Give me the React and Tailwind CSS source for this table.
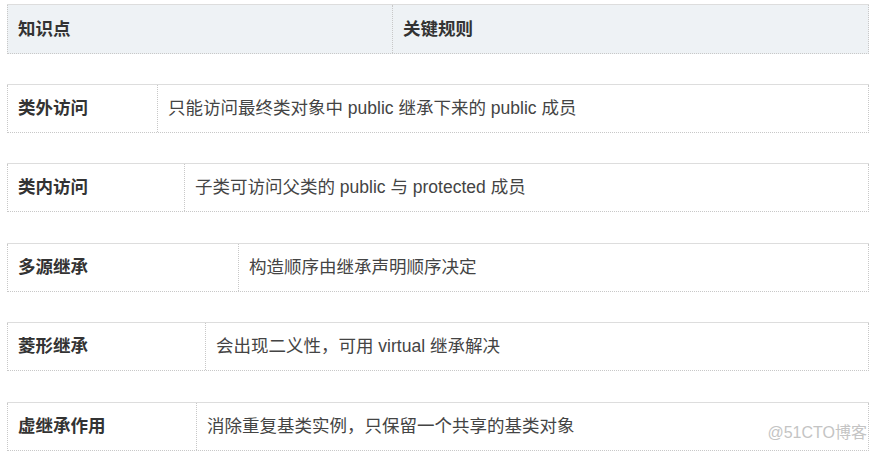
import React from "react";

const rows = [
  { k: "类外访问", v: "只能访问最终类对象中 public 继承下来的 public 成员", w: "w-[150px]" },
  { k: "类内访问", v: "子类可访问父类的 public 与 protected 成员", w: "w-[177px]" },
  { k: "多源继承", v: "构造顺序由继承声明顺序决定", w: "w-[231px]" },
  { k: "菱形继承", v: "会出现二义性，可用 virtual 继承解决", w: "w-[198px]" },
  { k: "虚继承作用", v: "消除重复基类实例，只保留一个共享的基类对象", w: "w-[189px]" },
];

const gaps = ["mt-[30px]", "mt-[30px]", "mt-[31px]", "mt-[30px]", "mt-[31px]"];

export default function App() {
  return (
    <div
      className="relative w-[878px] h-[455px] bg-white overflow-hidden"
      style={{ fontFamily: '"Liberation Sans", "Noto Sans CJK SC", sans-serif' }}
    >
      <div className="pt-[4px] pl-[7px] w-[869px]">
        {/* header */}
        <div className="h-[50px] border-t border-[#dddddd] bg-[#eef2f5]">
          <div className="flex h-full border-x border-b border-dotted border-[#c8c8c8]">
            <div className="w-[385px] shrink-0 border-r border-dotted border-[#c8c8c8] flex items-center pl-[10px] text-[17.5px] font-bold text-[#333333]">
              知识点
            </div>
            <div className="flex-1 flex items-center pl-[10px] text-[17.5px] font-bold text-[#333333]">
              关键规则
            </div>
          </div>
        </div>
        {rows.map((r, i) => (
          <div key={i} className={`${gaps[i]} h-[49px] border-t border-[#dddddd]`}>
            <div className="flex h-full border-x border-b border-dotted border-[#c8c8c8]">
              <div
                className={`${r.w} shrink-0 border-r border-dotted border-[#c8c8c8] flex items-center pl-[10px] text-[17.5px] font-bold text-[#333333]`}
              >
                {r.k}
              </div>
              <div className="flex-1 flex items-center pl-[10px] text-[17.5px] text-[#444444]">
                {r.v}
              </div>
            </div>
          </div>
        ))}
      </div>
      <div className="absolute right-[11px] top-[425px] text-[16px] text-[#c4c4c4] leading-none">
        @51CTO博客
      </div>
    </div>
  );
}
